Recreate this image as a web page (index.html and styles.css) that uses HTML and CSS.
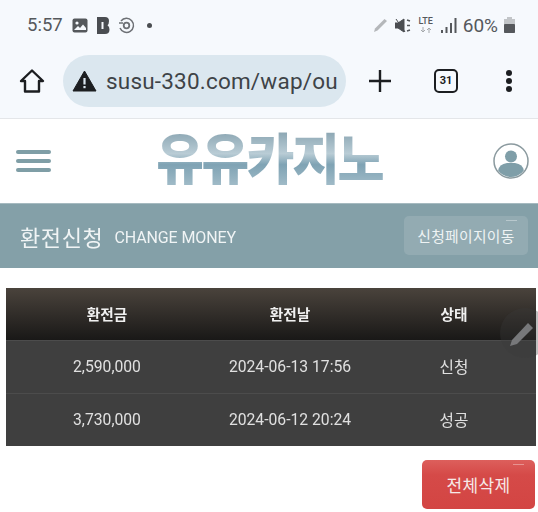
FILE: index.html
```html
<!DOCTYPE html>
<html lang="ko">

<head>
    <meta charset="UTF-8">
    <meta name="viewport" content="width=device-width, initial-scale=1.0">
    <title>환전신청</title>
    <link rel="stylesheet" href="styles.css">
</head>

<body>
    <!-- phone status bar -->
    <div class="status-bar">
        <div class="status-left">
            <span class="time">5:57</span>
            <svg class="ico" width="16" height="15" viewBox="0 0 16 15"><rect x="0.5" y="0.5" width="15" height="14" rx="2" fill="#55585c"/><circle cx="5" cy="5" r="1.6" fill="#f6f9fd"/><path d="M2 12 L6 8 L8 10 L11 6.5 L14 10 V12 Z" fill="#f6f9fd"/></svg>
            <svg class="ico" width="14" height="17" viewBox="0 0 14 17"><path d="M1 0 H9 Q13 0 13 4 Q13 7 11.500 8.200 Q13.500 9.500 13.500 12.500 Q13.500 17 9 17 H1 Z" fill="#4a4d51"/><rect x="5.500" y="5" width="2" height="7" fill="#f6f9fd"/></svg>
            <svg class="ico" width="17" height="17" viewBox="0 0 17 17" fill="none" stroke="#6d7075"><path d="M3 4 A7 7 0 1 1 2 11" stroke-width="1.500"/><circle cx="8.500" cy="8.500" r="2.800" stroke-width="1.800"/><path d="M1 6 H5" stroke-width="1.500"/></svg>
            <span class="dot"></span>
        </div>
        <div class="status-right">
            <svg class="ico" width="16" height="16" viewBox="0 0 16 16"><path d="M1 15 L2 11.500 L11.500 2 L14 4 L4.500 13.500 Z" fill="#b4b7ba"/></svg>
            <svg class="ico" width="16" height="15" viewBox="0 0 16 15"><path d="M0 5 H3 L9 1 V14 L3 10 H0 Z M1 1 L10 14" fill="#4a4d51" stroke="#4a4d51"/><path d="M12 2 L15 3 M12 7.500 H15 M12 13 L15 12" stroke="#55585c" stroke-width="1.500"/></svg>
            <div class="lte">
                <span>LTE</span>
                <svg class="ico" width="14" height="6" viewBox="0 0 14 6" fill="none" stroke="#a5a8ab"><path d="M4 0 V5 M2 3 L4 5 L6 3 M10 6 V1 M8 3 L10 1 L12 3"/></svg>
            </div>
            <svg class="ico" width="16" height="15" viewBox="0 0 16 15" fill="#55585c"><rect x="0" y="12" width="2" height="3"/><rect x="4.500" y="9" width="2" height="6"/><rect x="9" y="5" width="2" height="10"/><rect x="13.500" y="0" width="2" height="15"/></svg>
            <span class="battery-text">60%</span>
            <svg class="ico" width="11" height="16" viewBox="0 0 11 16"><path d="M3 0 H8 V2 H11 V16 H0 V2 H3 Z" fill="#c2c5c8"/><rect y="7" width="11" height="9" rx="1" fill="#55585c"/></svg>
        </div>
    </div>

    <!-- browser toolbar -->
    <div class="toolbar">
        <svg class="tool-home" width="26" height="26" viewBox="0 0 26 26" fill="none" stroke="#1c1e21" stroke-width="2.400" stroke-linejoin="round"><path d="M2 13 L13 2.500 L24 13 H20 V23.500 H6 V13 Z"/></svg>
        <div class="address">
            <svg width="25" height="22" viewBox="0 0 25 22"><path d="M12.500 1 L24 21 H1 Z" fill="#1c1e21" stroke="#1c1e21" stroke-linejoin="round"/><rect x="11.400" y="8" width="2.200" height="6.500" fill="#dbe7ef"/><rect x="11.400" y="16" width="2.200" height="2.200" fill="#dbe7ef"/></svg>
            <span class="url">susu-330.com/wap/ou</span>
        </div>
        <svg class="tool-plus" width="22" height="22" viewBox="0 0 22 22" stroke="#1c1e21" stroke-width="2.400"><path d="M11 0 V22 M0 11 H22"/></svg>
        <span class="tabs">31</span>
        <span class="menu"><i></i><i></i><i></i></span>
    </div>

    <!-- site header -->
    <header class="site-header">
        <span class="burger"><i></i><i></i><i></i></span>
        <div class="logo">유유카지노</div>
        <svg width="36" height="36" viewBox="0 0 36 36"><defs><clipPath id="avatar"><circle cx="18" cy="18" r="16"/></clipPath></defs><circle cx="18" cy="18" r="17" fill="#fff" stroke="#8b9a9f" stroke-width="1.500"/><g clip-path="url(#avatar)" fill="#7f9ea8"><circle cx="18" cy="13.500" r="6"/><path d="M5 36 V28 Q6 21 14 20 H22 Q30 21 31 28 V36 Z"/></g></svg>
    </header>

    <div class="title-band">
        <div class="title-text">
            <h1>환전신청</h1>
            <span>CHANGE MONEY</span>
        </div>
        <a class="btn-page">신청페이지이동</a>
    </div>

    <main class="content">
        <table class="money-table">
            <thead>
                <tr>
                    <th class="col-amount">환전금</th>
                    <th class="col-date">환전날</th>
                    <th class="col-state">상태</th>
                </tr>
            </thead>
            <tbody>
                <tr>
                    <td>2,590,000</td>
                    <td>2024-06-13 17:56</td>
                    <td>신청</td>
                </tr>
                <tr>
                    <td>3,730,000</td>
                    <td>2024-06-12 20:24</td>
                    <td>성공</td>
                </tr>
            </tbody>
        </table>
        <div class="actions">
            <a class="btn-delete">전체삭제</a>
        </div>
    </main>

    <!-- floating edge handle -->
    <div class="edge-handle">
        <svg width="26" height="26" viewBox="0 0 26 26"><path d="M1 25 L3 19 L19 2 L24 7 L8 23 Z" fill="#77787a"/></svg>
    </div>
</body>

</html>
```

FILE: styles.css
```css
* {
    box-sizing: border-box;
}

body {
    margin: 0;
    width: 538px;
    height: 512px;
    overflow: hidden;
    position: relative;
    background-color: #ffffff;
    font-family: Roboto, "Noto Sans CJK KR", sans-serif;
    filter: blur(0.4px);
}

.ico {
    display: block;
    flex: none;
}

/* status bar */
.status-bar {
    height: 45px;
    padding: 5px 23px 0 27px;
    display: flex;
    align-items: center;
    justify-content: space-between;
    background-color: #f6f9fd;
    color: #55585c;
}

.status-left,
.status-right {
    display: flex;
    align-items: center;
    gap: 8px;
}

.status-right {
    gap: 6px;
}

.time {
    font-size: 18.500px;
    margin-right: 1px;
}

.dot {
    width: 5px;
    height: 5px;
    margin-left: 4px;
    border-radius: 50%;
    background-color: #4a4d51;
}

.lte {
    width: 16px;
    margin: 0 1px;
    display: flex;
    flex-direction: column;
    align-items: center;
    gap: 1px;
    font-size: 9px;
    line-height: 9px;
    font-weight: 500;
}

.battery-text {
    font-size: 19px;
    margin-left: 0;
}

/* browser toolbar */
.toolbar {
    height: 74px;
    padding: 0 24px 2px 19px;
    display: flex;
    align-items: center;
    background-color: #f6f9fd;
    border-bottom: 1px solid #e4e6e9;
}

.address {
    width: 283px;
    height: 52px;
    margin-left: 18px;
    padding-left: 9px;
    display: flex;
    align-items: center;
    gap: 9px;
    border-radius: 26px;
    background-color: #dbe7ef;
}

.url {
    font-size: 22.5px;
    letter-spacing: 0.2px;
    color: #3e4347;
    white-space: nowrap;
}

.tool-plus {
    margin-left: 23px;
}

.tabs {
    width: 24px;
    height: 24px;
    margin-left: 43px;
    border: 2px solid #1c1e21;
    border-radius: 5px;
    font-size: 11px;
    font-weight: 700;
    line-height: 20px;
    text-align: center;
    color: #1c1e21;
}

.menu {
    margin-left: 48px;
    display: flex;
    flex-direction: column;
    gap: 2px;
}

.menu i {
    width: 6px;
    height: 6px;
    border-radius: 50%;
    background-color: #1c1e21;
}

/* site header */
.site-header {
    height: 84px;
    padding: 0 9px 0 16px;
    display: flex;
    align-items: center;
    justify-content: space-between;
    background-color: #ffffff;
}

.burger {
    display: flex;
    flex-direction: column;
    gap: 5px;
}

.burger i {
    width: 35px;
    height: 4px;
    border-radius: 2px;
    background-color: #7f9ea6;
}

.logo {
    font-size: 45px;
    font-weight: 900;
    line-height: 60px;
    letter-spacing: -2px;
    margin-left: -4px;
    color: transparent;
    background: linear-gradient(#7d9aa8, #b9ccd5 40%, #7fa3b4 55%, #b4c9d3);
    -webkit-background-clip: text;
    background-clip: text;
    transform: scale(1.15, 1.22);
}

.title-band {
    height: 65px;
    padding: 0 10px 0 20px;
    display: flex;
    align-items: center;
    justify-content: space-between;
    background-color: #84a0a8;
    border-top: 1px solid #a6bac0;
    color: #f0f4f5;
}

.title-text {
    display: flex;
    align-items: center;
    gap: 11px;
}

h1 {
    margin: 0;
    font-size: 22px;
    font-weight: 400;
    letter-spacing: 0.6px;
}

.title-text span {
    font-size: 16px;
    letter-spacing: -0.1px;
    padding-top: 3px;
}

.btn-page {
    position: relative;
    width: 124px;
    height: 39px;
    margin-top: -2px;
    display: flex;
    align-items: center;
    justify-content: center;
    font-size: 14.800px;
    letter-spacing: 0.3px;
    border-radius: 5px;
    background-color: #93abb2;
    color: #eef3f4;
}

/* little highlight on the buttons */
.btn-page::after,
.btn-delete::after {
    content: "";
    position: absolute;
    top: 4px;
    right: 11px;
    width: 11px;
    height: 1px;
    background-color: rgba(255, 255, 255, 0.35);
}

/* table */
.content {
    padding: 20px 2px 0 6px;
}

.money-table {
    width: 530px;
    border-collapse: collapse;
    table-layout: fixed;
    color: #e0e0e0;
    text-align: center;
    font-size: 15.700px;
}

.money-table th {
    height: 52px;
    padding: 0;
    font-size: 14.700px;
    font-weight: 700;
    color: #f0f0f0;
    background: linear-gradient(#4a433c, #191817);
}

.money-table td {
    height: 53px;
    padding: 0;
    background-color: #3f3f3f;
    border-top: 1px solid #4c4c4c;
}

.col-amount {
    width: 202px;
}

.col-date {
    width: 164px;
}

.actions {
    margin-top: 14px;
    padding-right: 1px;
    display: flex;
    justify-content: flex-end;
}

.btn-delete {
    position: relative;
    width: 113px;
    height: 49px;
    display: flex;
    align-items: center;
    justify-content: center;
    border-radius: 5px;
    font-size: 17px;
    letter-spacing: 0.3px;
    color: #f6e9e8;
    background: linear-gradient(#dd5f5c, #d54a48 30%, #d34543);
}

.edge-handle {
    position: absolute;
    top: 308px;
    left: 500px;
    width: 50px;
    height: 50px;
    padding: 13px 0 0 9px;
    border-radius: 50%;
    background-color: rgba(60, 60, 60, 0.32);
}
```
